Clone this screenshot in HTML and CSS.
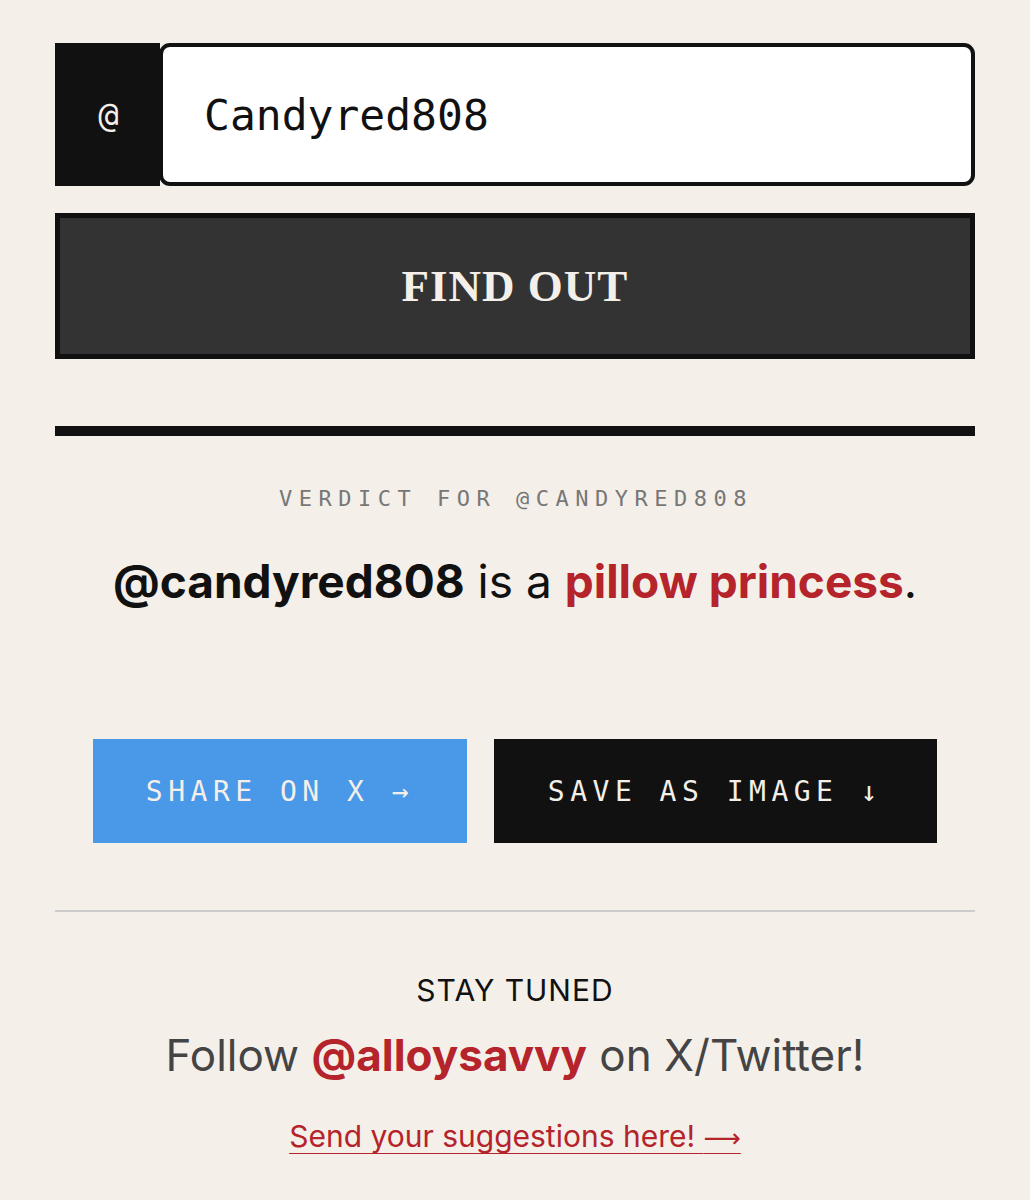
FILE: index.html
```html
<!DOCTYPE html>
<html lang="en">
<head>
<meta charset="UTF-8">
<title>Verdict</title>
<link rel="stylesheet" href="styles.css">
</head>
<body>

<div class="wrap">
  <!-- Handle input -->
  <div class="handle-row">
    <div class="prefix">@</div>
    <div class="handle-input">Candyred808</div>
  </div>
  <button class="find-btn">FIND OUT</button>

  <hr class="thick">

  <!-- Result -->
  <div class="result">
    <div class="verdict-label">VERDICT FOR @CANDYRED808</div>
    <div class="verdict"><b>@candyred808</b> is a <b class="red">pillow princess</b>.</div>
  </div>

  <div class="actions">
    <button class="act share">SHARE ON X →</button>
    <button class="act save">SAVE AS IMAGE ↓</button>
  </div>

  <hr class="thin">

  <!-- Footer -->
  <div class="footer">
    <div class="tuned">STAY TUNED</div>
    <div class="follow">Follow <b class="red">@alloysavvy</b> on X/Twitter!</div>
    <a class="suggest" href="#">Send your suggestions here! <span class="arrow">⟶</span></a>
  </div>
</div>

</body>
</html>
```

FILE: styles.css
```css
body{margin:0;background:#f4efe9;font-family:Inter,"Noto Sans",sans-serif;color:#111}
.wrap{width:920px;margin:0 0 0 55px;padding-top:43px}
/* Input */
.handle-row{display:flex;height:143px}
.prefix{width:103px;background:#111;color:#f4efe9;display:flex;align-items:center;justify-content:center;font-family:"DejaVu Sans Mono",monospace;font-size:34px;padding-left:2px}
.handle-input{flex:1;margin-left:-1px;background:#fff;border:4px solid #111;border-radius:11px;display:flex;align-items:center;padding-left:41px;font-family:"DejaVu Sans Mono",monospace;font-size:43px}
.find-btn{display:block;width:100%;height:146px;margin-top:27px;background:#333;border:5px solid #111;color:#f4efe9;font-family:"Liberation Serif",serif;font-weight:700;font-size:45px;letter-spacing:1px;padding:0}
/* Rules */
.thick{margin:67px 0 0;border:0;height:10px;background:#111}
.thin{margin:67px 0 0;border:0;height:2px;background:#ccc}
/* Result */
.result{text-align:center;padding-top:50px}
.verdict-label{font-family:"DejaVu Sans Mono",monospace;font-size:22px;letter-spacing:6.5px;color:#777;padding-left:2px}
.verdict{font-size:46px;margin-top:42px}
.verdict b{font-weight:700}
.red{color:#b5232b}
.actions{display:flex;justify-content:center;gap:27px;margin-top:130px}
.act{height:104px;border:0;padding:0 50px;font-family:"DejaVu Sans Mono",monospace;font-size:28px;letter-spacing:5.5px;color:#f4efe9}
.share{background:#4a98e8;width:374px}
.save{background:#111;width:443px}
/* Footer */
.footer{text-align:center;padding-top:60px}
.tuned{font-size:30px;letter-spacing:1px}
.follow{font-size:44px;color:#444;margin-top:20px}
.follow b{font-weight:700}
.suggest{display:inline-block;margin-top:36px;font-size:30px;color:#b5232b;text-decoration:underline;text-underline-offset:6px;text-decoration-thickness:3px}
.suggest .arrow{font-family:"DejaVu Sans",sans-serif;font-size:26px}
```
